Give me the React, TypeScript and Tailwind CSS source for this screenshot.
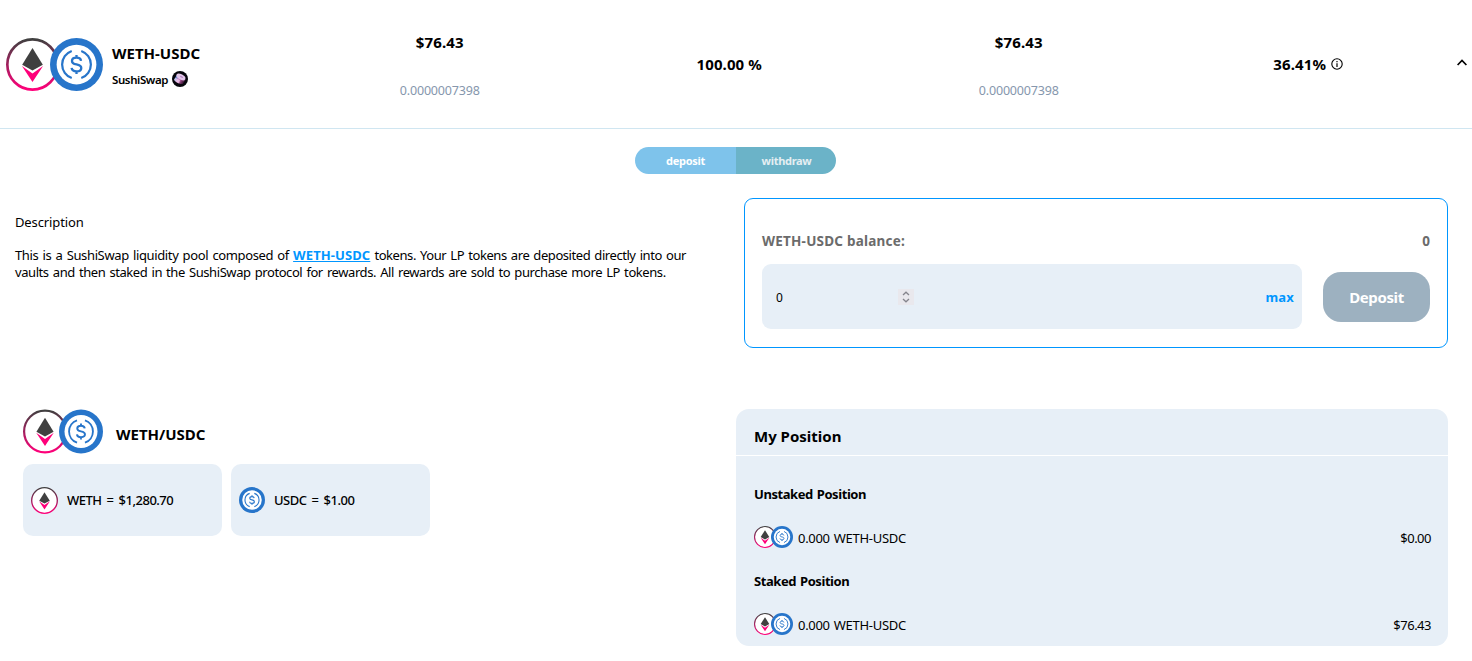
import type { ReactNode } from "react";

function WethIcon({ className }: { className: string }) {
  return (
    <svg viewBox="0 0 100 100" className={className}>
      <defs>
        <linearGradient id="weth-ring" x1="0" y1="0" x2="0" y2="1">
          <stop offset="0" stopColor="#404040" />
          <stop offset="1" stopColor="#ff007a" />
        </linearGradient>
      </defs>
      <circle cx="50" cy="50" r="47.5" fill="#fff" stroke="url(#weth-ring)" strokeWidth="5" />
      <path d="M50 19 69.500 50.500 50 61.500 30.500 50.500Z" fill="#404040" />
      <path d="M30 53 50 67 70 53 50 83Z" fill="#ff007a" />
    </svg>
  );
}

function UsdcIcon({ className }: { className: string }) {
  return (
    <svg viewBox="0 0 100 100" className={className} fill="none">
      <circle cx="50" cy="50" r="50" fill="#2775ca" />
      <circle cx="50" cy="50" r="37.500" fill="#fff" />
      <path
        d="M41 24.500A27 27 0 0 0 41 75.500M59 24.500A27 27 0 0 1 59 75.500"
        stroke="#2775ca"
        strokeWidth="4.200"
      />
      <path
        d="M58.500 43C58 38.500 54.500 37 50 37C45 37 41.500 39.200 41.500 43.200C41.500 47.500 45 48.800 50 49.700C55 50.600 59 52 59 56.500C59 60.500 55.500 63 50 63C45 63 41.300 61 40.800 56.500M50 32V37M50 63V68"
        stroke="#2775ca"
        strokeWidth="4.400"
      />
    </svg>
  );
}

function SushiIcon() {
  return (
    <svg viewBox="0 0 16 16" className="size-4 shrink-0">
      <defs>
        <linearGradient id="sushi-side" x1="0" y1="0.3" x2="1" y2="0.8">
          <stop offset="0" stopColor="#3c8fd0" />
          <stop offset="0.4" stopColor="#e07cca" />
          <stop offset="0.75" stopColor="#5a2350" />
          <stop offset="1" stopColor="#1a1020" />
        </linearGradient>
      </defs>
      <circle cx="8" cy="8" r="8" fill="#06060c" />
      <path d="M4.500 4.500 13.800 8.200 10.600 13C8.500 13.600 3 11.100 2 8.800Z" fill="url(#sushi-side)" />
      <path d="M3.400 6.800 2 8.800C3 10.300 5 11.800 7 12.600L8 9.200Z" fill="#f3dff5" opacity="0.65" />
      <ellipse cx="8.900" cy="5.900" rx="4.900" ry="2.700" transform="rotate(28 8.900 5.900)" fill="#e2c6ea" />
      <ellipse cx="9.500" cy="5.900" rx="1.700" ry="0.800" transform="rotate(28 9.500 5.900)" fill="#b98ac4" />
    </svg>
  );
}

function InfoIcon() {
  return (
    <svg viewBox="0 0 12 12" className="size-3" fill="none" stroke="#000">
      <circle cx="6" cy="6" r="5.200" strokeWidth="1.100" />
      <path d="M6 5.200V9M6 3V4.200" strokeWidth="1.200" />
    </svg>
  );
}

function TokenPair({ size }: { size: "lg" | "md" | "sm" }) {
  if (size === "lg")
    return (
      <div className="flex shrink-0">
        <WethIcon className="size-[53px]" />
        <UsdcIcon className="-ml-[9px] size-[53px]" />
      </div>
    );
  if (size === "md")
    return (
      <div className="flex shrink-0">
        <WethIcon className="h-[45px] w-[44px]" />
        <UsdcIcon className="-ml-[8px] h-[45px] w-[44px]" />
      </div>
    );
  return (
    <div className="flex shrink-0">
      <WethIcon className="size-[22px]" />
      <UsdcIcon className="-ml-[5px] size-[22px]" />
    </div>
  );
}

function Amount({ usd, tokens }: { usd: string; tokens: string }) {
  return (
    <div className="flex flex-col items-center pt-[32px]">
      <span className="text-[15px] leading-[20px] font-bold tracking-[0.150px]">{usd}</span>
      <span className="mt-[30px] text-[12.500px] leading-[18px] tracking-[-0.170px] text-[#8697ad]">{tokens}</span>
    </div>
  );
}

function PriceCard({ icon, children }: { icon: ReactNode; children: ReactNode }) {
  return (
    <div className="flex h-[72px] w-[199px] items-center rounded-[10px] bg-[#e7eff7] pl-2">
      {icon}
      <span className="mt-[2px] ml-[9px] text-[13px] font-medium tracking-[-0.500px] [word-spacing:2.200px]">{children}</span>
    </div>
  );
}

function PositionRow({ title, value }: { title: string; value: string }) {
  return (
    <div className="h-[87px] px-[18px]">
      <h3 className="text-[13px] leading-[18px] font-bold tracking-[-0.430px] [word-spacing:1px]">{title}</h3>
      <div className="mt-[23px] flex h-[22px] items-center text-[13px]">
        <TokenPair size="sm" />
        <span className="mt-[3px] ml-[5px] tracking-[-0.300px] [word-spacing:1px]">0.000 WETH-USDC</span>
        <span className="mt-[3px] -mr-px ml-auto tracking-[-0.500px]">{value}</span>
      </div>
    </div>
  );
}

export default function App() {
  return (
    <main className="h-[661px] w-[1472px] overflow-hidden bg-white font-['Noto_Sans','Open_Sans',sans-serif] text-black">
      <header className="grid h-[129px] grid-cols-[295px_repeat(4,289.500px)_19px] border-b border-[#d0e6f1]">
        <div className="flex pt-[38px] pl-[6px]">
          <TokenPair size="lg" />
          <div className="ml-[9px] pt-[5px]">
            <div className="text-[15px] leading-[20px] font-bold">WETH-USDC</div>
            <div className="mt-[8px] flex h-4 items-center gap-[3.500px] text-[11.500px] leading-[16px] font-semibold">
              <span className="pt-px tracking-[-0.400px]">SushiSwap</span>
              <SushiIcon />
            </div>
          </div>
        </div>
        <Amount usd="$76.43" tokens="0.0000007398" />
        <div className="flex items-center justify-center text-[15px] font-bold tracking-[0.120px]">100.00 %</div>
        <Amount usd="$76.43" tokens="0.0000007398" />
        <div className="flex items-center justify-center gap-[5px] text-[15px] font-bold tracking-[0.120px]">
          <span>36.41%</span>
          <InfoIcon />
        </div>
        <div className="flex pt-[59px] pl-[4px]">
          <svg viewBox="0 0 10 7" className="h-[7px] w-[10px]" fill="none" stroke="#000" strokeWidth="1.700">
            <path d="M.6 6 5 1.500 9.400 6" />
          </svg>
        </div>
      </header>

      <div className="mt-[18px] ml-[635px] flex h-[27px] w-[201px] overflow-hidden rounded-full text-[11px] font-bold tracking-[-0.300px]">
        <button className="w-[101px] bg-[#7ec3eb] pt-[2px] text-white">deposit</button>
        <button className="w-[100px] bg-[#6bb3c8] pt-[2px] pl-px text-[#e4eef2]">withdraw</button>
      </div>

      <section className="mt-[24px] flex h-[150px]">
        <div className="w-[744px] pt-[15px] pl-[15px] text-[13px]">
          <h2 className="leading-[18px] tracking-[-0.120px]">Description</h2>
          <p className="mt-[16px] leading-[17px] tracking-[-0.400px] [word-spacing:1.150px]">
            <span className="tracking-[-0.365px]">This is a SushiSwap liquidity pool composed of </span>
            <a className="font-bold tracking-[0.100px] text-[#0096ff] underline">WETH-USDC</a>
            <span className="tracking-[-0.435px]"> tokens. Your LP tokens are deposited directly into our</span>
            <br />
            <span className="tracking-[-0.425px]">
              vaults and then staked in the SushiSwap protocol for rewards. All rewards are sold to purchase more LP tokens.
            </span>
          </p>
        </div>
        <div className="h-[150px] w-[704px] rounded-[9px] border border-[#0096ff] px-[17px]">
          <div className="mt-[33px] flex justify-between text-[13.500px] leading-[18px] font-bold text-[#6b6b6b]">
            <span className="tracking-[0.220px]">WETH-USDC balance:</span>
            <span>0</span>
          </div>
          <div className="mt-[14px] flex items-center justify-between">
            <div className="flex h-[65px] w-[540px] items-center rounded-[9px] bg-[#e7eff7] pr-[8px] pl-[14px] text-[13px]">
              <span className="w-[122px] pt-[2px] text-[12px]">0</span>
              <span className="flex size-4 items-center justify-center bg-[#e9e8ed]">
                <svg viewBox="0 0 8 12" className="h-[12px] w-[8px]" fill="none" stroke="#85858d" strokeWidth="1.300">
                  <path d="M1 4 4 1.200 7 4M1 8 4 10.800 7 8" />
                </svg>
              </span>
              <button className="ml-auto pt-[2px] font-bold tracking-[0.200px] text-[#0096ff]">max</button>
            </div>
            <button className="h-[50px] w-[107px] rounded-[18px] bg-[#9db1c0] pt-[2px] text-[15px] font-bold tracking-[-0.400px] text-white">
              Deposit
            </button>
          </div>
        </div>
      </section>

      <section className="mt-[61px] flex justify-between pr-[24px] pl-[23px]">
        <div>
          <div className="flex h-[45px]">
            <TokenPair size="md" />
            <h2 className="mt-[15px] ml-[13px] text-[15px] leading-[20px] font-bold">WETH/USDC</h2>
          </div>
          <div className="mt-[10px] flex gap-[9px]">
            <PriceCard icon={<WethIcon className="size-[27px]" />}>WETH = $1,280.70</PriceCard>
            <PriceCard icon={<UsdcIcon className="size-[26px]" />}>USDC = $1.00</PriceCard>
          </div>
        </div>
        <div className="h-[237px] w-[712px] rounded-[13px] bg-[#e7eff7]">
          <h2 className="h-[47px] border-b border-white pt-[17px] pl-[18px] text-[15px] leading-[20px] font-bold">My Position</h2>
          <div className="pt-[29px]">
            <PositionRow title="Unstaked Position" value="$0.00" />
            <PositionRow title="Staked Position" value="$76.43" />
          </div>
        </div>
      </section>
    </main>
  );
}
